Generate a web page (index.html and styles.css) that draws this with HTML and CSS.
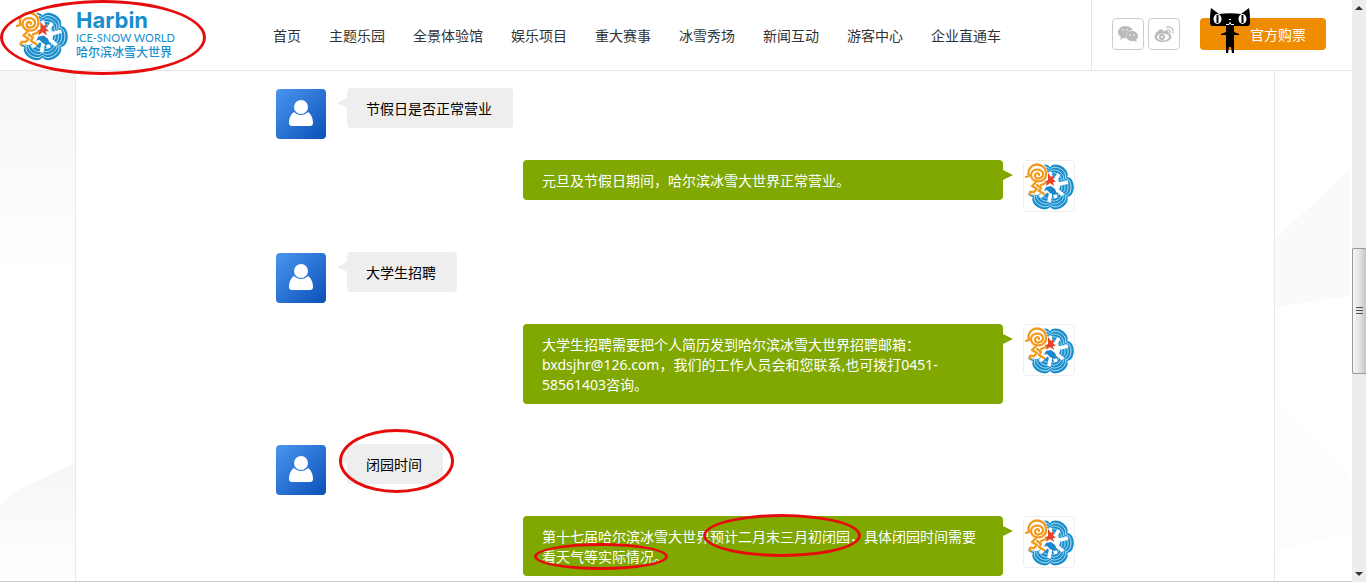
FILE: index.html
```html
<!DOCTYPE html>
<html lang="zh-CN">
<head>
<meta charset="utf-8">
<meta name="viewport" content="width=device-width,initial-scale=1.0"/>
<title>哈尔滨冰雪大世界</title>
<link rel="stylesheet" href="styles.css">
</head>

<body>
<svg class="defs" aria-hidden="true">
    <path id="ring" d="M16.500-9.500C25-9 25 9 16.500 9.500 20 17 5 26 0 19-5 26-20 17-16.500 9.500-25 9-25-9-16.500-9.500-20-17-5-26 0-19 5-26 20-17 16.500-9.500z"/>
    <symbol id="emblem" viewBox="0 0 50 50">
        <g transform="translate(26 26)" fill="#1a8ecb" stroke="#c9e8f7" stroke-width="1">
            <use href="#ring" transform="scale(1.040)" stroke="none"/>
            <use href="#ring" transform="scale(.92)"/>
            <use href="#ring" transform="scale(.79)"/>
            <use href="#ring" transform="scale(.66)" stroke-width="1.200"/>
            <use href="#ring" transform="scale(.52)" stroke-width="1.500"/>
        </g>
        <path fill="#fff" d="M0 0h17l5 6 3 10-2 12-5 4-5 2-8-1-5-3z"/>
        <path fill="none" stroke="#fff" stroke-width="3.500" d="M28 25L26 11M28 25L35 13M28 25L44 21M28 25L39 34M28 25L32 37M28 25L25 41M28 25L16 36"/>
        <circle cx="28" cy="25" r="8" fill="#fff"/>
        <g fill="none" stroke="#f39a1e" stroke-width="2.300" stroke-linecap="round" stroke-linejoin="round">
            <path d="M15 14c0-3-4-2-4 1 0 4 8 3 8-2 0-6-12-6-12 1 0 8 14 9 15 0C23 4 12 1 7 6c-3 3-3 6-2 9l-3 1"/>
            <path d="M12 21l-4 4 5 3-3 3-4 0 0 3M13 24l4 3-2 3 5 3M17 24l5-2"/>
        </g>
        <path fill="#e8432a" d="M20 21l4-2 0-7 3 4 3-2-1 4 3 3-3 0 1 4-4-3-4 3 1-4z"/>
        <path fill="#1b86c8" d="M22 26l5-1 4 3 2 5-3 1-4-2-3-3-3 1z"/>
    </symbol>
    <symbol id="person" viewBox="0 0 50 50">
        <circle cx="25" cy="18" r="7"/>
        <path d="M18 23c4 4 10 4 14 0 3 2 5 6 5 11 0 2-1 3-3 3H16c-2 0-3-1-3-3 0-5 2-9 5-11z"/>
    </symbol>
</svg>

<div class="window">
    <div class="page">
        <header class="header">
            <a class="logo marked" href="#">
                <svg class="logo-emblem"><use href="#emblem"/></svg>
                <span class="logo-text">
                    <b class="logo-name">Harbin</b>
                    <span class="logo-en">ICE-SNOW WORLD</span>
                    <span class="logo-cn">哈尔滨冰雪大世界</span>
                </span>
            </a>
            <nav class="nav">
                <a href="#">首页</a>
                <a href="#">主题乐园</a>
                <a href="#">全景体验馆</a>
                <a href="#">娱乐项目</a>
                <a href="#">重大赛事</a>
                <a href="#">冰雪秀场</a>
                <a href="#">新闻互动</a>
                <a href="#">游客中心</a>
                <a href="#">企业直通车</a>
            </nav>
            <div class="tools">
                <a class="share" href="#" aria-label="微信">
                    <svg viewBox="0 0 30 30">
                        <path fill="#bbb" d="M12 7c-4 0-7 3-7 6 0 2 1 4 3 5l-1 3 3-2h3c-1-4 2-8 7-8-1-2-4-4-8-4z"/>
                        <path fill="#bbb" d="M19 12c-4 0-6 2-6 5s3 5 6 5h2l3 1-1-2c1-1 2-2 2-4 0-3-3-5-6-5z"/>
                        <path stroke="#fff" stroke-width="1.500" stroke-linecap="round" d="M10 11h0M14 11h0M17 16h0M21 16h0"/>
                    </svg>
                </a>
                <a class="share" href="#" aria-label="微博">
                    <svg viewBox="0 0 30 30" fill="none" stroke="#bbb">
                        <path fill="#bbb" d="M13 11c-3-1-7 4-7 7 0 6 15 6 16 0 0-2-1-3-3-3 1-3-1-4-5-2 0-1 0-2-1-2z"/>
                        <ellipse cx="14" cy="18" rx="6" ry="3.500" fill="#fff" stroke="none"/>
                        <circle cx="13" cy="18" r="2" stroke-width="2"/>
                        <path d="M18 8c4-1 7 2 6 6M18 11c2-1 4 1 3 3" stroke-width="1.300" stroke-linecap="round"/>
                    </svg>
                </a>
                <button class="ticket" type="button">
                    <svg class="cat" viewBox="0 0 40 46">
                        <path d="M1 0l8 6c7-1 15-1 22 0l8-6c1 5 1 10 1 15 0 2-1 3-3 3H3c-2 0-3-1-3-3C0 10 0 5 1 0z"/>
                        <path d="M16 17h8v7l5 2v1l-5 0v11l0 7h-2l-1-6h-2l-1 6h-2l0-7V27l-5 0v-1l5-2z"/>
                        <g fill="#fff"><ellipse cx="7.500" cy="11" rx="4" ry="5"/><ellipse cx="32.500" cy="11" rx="4" ry="5"/></g>
                        <path d="M7.500 7v8M32.500 7v8" stroke="#000" stroke-width="2"/>
                        <path d="M19 11.500h2M16 16.500h3l1-2 1 2h3" fill="none" stroke="#fff"/>
                    </svg>
                    官方购票
                </button>
            </div>
        </header>

        <main class="main">
            <svg class="side" viewBox="0 0 75 510" preserveAspectRatio="none">
                <defs>
                    <linearGradient id="fade" x2="0" y2="1"><stop stop-color="#f6f6f6"/><stop offset="1" stop-color="#fff"/></linearGradient>
                </defs>
                <path fill="url(#fade)" d="M0 0h75v210H0z"/>
                <path fill="url(#fade)" d="M75 392L14 421 0 435v75h75z"/>
            </svg>
            <div class="content">
                <div class="chat">
                    <div class="row ask">
                        <div class="avatar user"><svg><use href="#person"/></svg></div>
                        <p class="bubble">节假日是否正常营业</p>
                    </div>
                    <div class="row reply">
                        <p class="bubble">元旦及节假日期间，哈尔滨冰雪大世界正常营业。</p>
                        <div class="avatar park"><svg><use href="#emblem"/></svg></div>
                    </div>
                    <div class="row ask">
                        <div class="avatar user"><svg><use href="#person"/></svg></div>
                        <p class="bubble">大学生招聘</p>
                    </div>
                    <div class="row reply">
                        <p class="bubble">大学生招聘需要把个人简历发到哈尔滨冰雪大世界招聘邮箱：bxdsjhr@126.com，我们的工作人员会和您联系,也可拨打0451-58561403咨询。</p>
                        <div class="avatar park"><svg><use href="#emblem"/></svg></div>
                    </div>
                    <div class="row ask">
                        <div class="avatar user"><svg><use href="#person"/></svg></div>
                        <p class="bubble"><span class="marked mark-topic">闭园时间</span></p>
                    </div>
                    <div class="row reply">
                        <p class="bubble">第十七届哈尔滨冰雪大世界<span class="marked mark-date">预计二月末三月初闭园</span>，具体闭园时间需要<span class="marked mark-note">看天气等实际情况</span>。</p>
                        <div class="avatar park"><svg><use href="#emblem"/></svg></div>
                    </div>
                </div>
            </div>
            <svg class="side" viewBox="0 0 77 510" preserveAspectRatio="none">
                <path fill="#fafafa" d="M0 169L77 97v128L0 236z"/>
                <path fill="#fdfdfd" d="M0 332l77 72v58L0 480z"/>
            </svg>
        </main>
    </div>

    <div class="scrollbar" aria-hidden="true">
        <i class="arrow up"></i>
        <i class="space before"></i>
        <i class="thumb"></i>
        <i class="space after"></i>
        <i class="arrow down"></i>
    </div>
</div>
</body>
</html>
```
FILE: styles.css
```css
*,*::before,*::after{padding:0;margin:0;box-sizing:border-box;}
body{
    font:14px/20px "Noto Sans","Noto Sans CJK SC",sans-serif;
    color:#000;
    background:#fff;
}
a{color:inherit;text-decoration:none;}
svg{display:block;}
.defs{position:absolute;width:0;height:0;}
.window{
    display:flex;
    min-height:100vh;
    padding-bottom:1px;
}
.page{
    flex:1;
    min-width:0;
    display:flex;
    flex-direction:column;
    border-bottom:1px solid #ccc;
}

/* header */
.header{
    display:flex;
    align-items:stretch;
    height:71px;
    border-bottom:1px solid #e6e6e6;
    background:#fff;
}
.logo{
    display:flex;
    align-items:center;
    gap:8px;
    width:273px;
    padding-left:15px;
    color:#1a8ecb;
}
.logo-emblem{width:53px;height:53px;}
.logo-text{
    display:flex;
    flex-direction:column;
    padding-bottom:2px;
    white-space:nowrap;
}
.logo-name{font:bold 22px/22px Inter,sans-serif;}
.logo-en{font:11px/14px Lato,sans-serif;}
.logo-cn{font:500 12px/14px "Noto Sans CJK SC",sans-serif;}
.nav{
    display:flex;
    align-items:center;
    gap:28px;
    padding-top:2px;
    color:#333;
    white-space:nowrap;
}
.tools{
    display:flex;
    align-items:center;
    margin-left:auto;
    padding:0 26px 2px 20px;
    border-left:1px solid #e6e6e6;
}
.share{
    width:32px;
    height:32px;
    margin-right:4px;
    border:1px solid #ccc;
    border-radius:4px;
}
.ticket{
    position:relative;
    width:126px;
    height:32px;
    margin-left:16px;
    padding:2px 0 0 50px;
    border:0;
    border-radius:4px;
    background:#f08c00;
    color:#fff;
    font:inherit;
    text-align:left;
}
.cat{
    position:absolute;
    left:10px;
    top:-10px;
    width:40px;
    height:46px;
}

/* questions and answers */
.main{
    flex:1;
    display:grid;
    grid-template-columns:1fr minmax(0,1200px) 1fr;
    margin-right:2px;
}
.side{width:100%;height:510px;}
.content{
    padding:17px 0 5px;
    border:solid #e9e9e9;
    border-width:0 1px;
}
.chat{
    max-width:800px;
    margin:0 auto;
}
.row{
    display:flex;
    align-items:flex-start;
    gap:20px;
}
.ask{margin-bottom:20px;}
.reply{
    justify-content:flex-end;
    margin-bottom:40px;
}
.reply:last-child{margin-bottom:0;}
.bubble{
    position:relative;
    padding:11px 20px 9px 19px;
    border-radius:4px;
}
.ask .bubble{
    padding-right:21px;
    background:#eee;
}
.reply .bubble{
    width:480px;
    background:#80a800;
    color:#fff;
}
.bubble::before{
    content:"";
    position:absolute;
    top:10px;
    border:solid transparent;
    border-width:5px 10px;
}
.ask .bubble::before{
    right:100%;
    border-left:0;
    border-right-color:#eee;
}
.reply .bubble::before{
    left:100%;
    border-right:0;
    border-left-color:#80a800;
}
.avatar{
    flex:none;
    width:52px;
    height:52px;
    border:1px solid #fff;
    border-radius:4px;
}
.avatar svg{width:50px;height:50px;}
.user svg{
    border-radius:4px;
    background:linear-gradient(135deg,#4b96f0,#0a50b8);
    fill:#fff;
}
.park{border-color:#eee;}

/* red circles */
.marked{position:relative;}
.marked::after{
    content:"";
    position:absolute;
    z-index:1;
    border:3px solid #e60c0c;
    border-radius:50%;
    pointer-events:none;
}
.logo::after{left:0;top:0;width:206px;height:75px;}
.mark-topic::after{inset:-26px -32px -19px -27px;}
.mark-date::after{inset:-13px -11px -11px -7px;}
.mark-note::after{inset:-4px -14px -4px -8px;}

/* scrollbar */
.scrollbar{
    display:flex;
    flex-direction:column;
    align-items:center;
    width:14px;
    padding:6px 0;
    background:#ededed;
}
.arrow{border:solid transparent;border-width:0 4px;}
.up{border-bottom:4px solid #333;}
.down{border-top:4px solid #333;}
.before{flex:238;}
.after{flex:198;}
.thumb{
    width:14px;
    height:126px;
    border:1px solid #999;
    border-right:0;
    border-radius:2px 0 0 2px;
    background:
        repeating-linear-gradient(#555 0 1px,transparent 1px 3px) center/7px 8px no-repeat,
        linear-gradient(90deg,#f5f5f5,#e4e4e4 50%,#c4c4c8);
}
```
